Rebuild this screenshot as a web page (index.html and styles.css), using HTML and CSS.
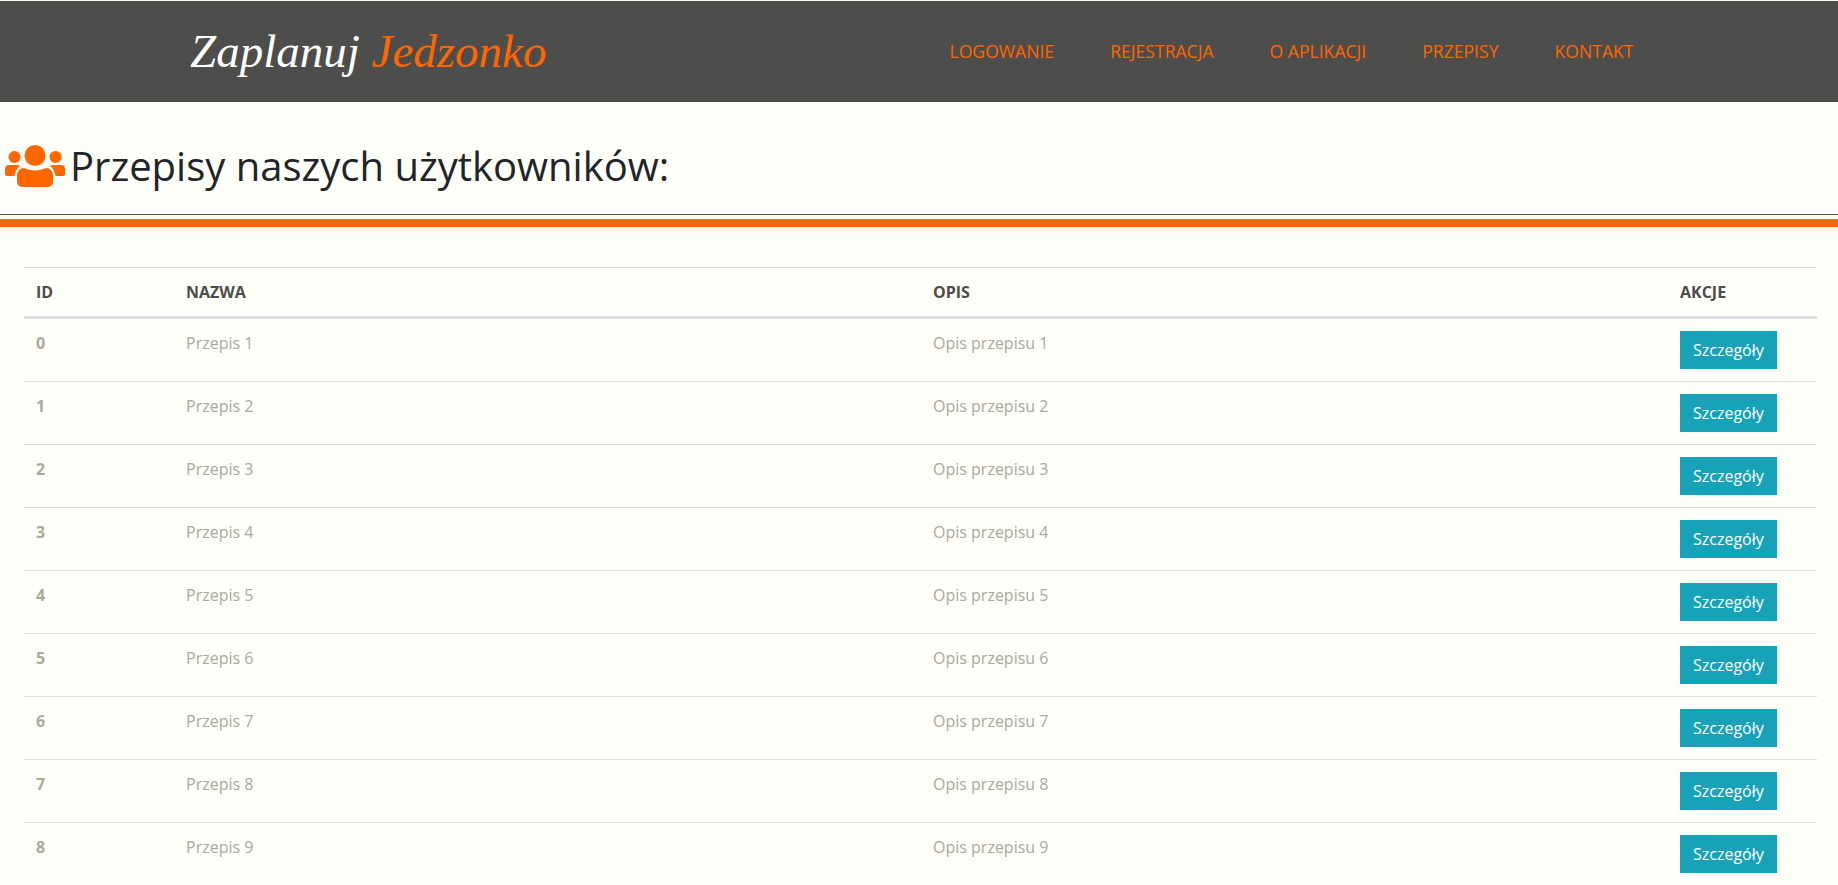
FILE: index.html
```html
<!DOCTYPE html>
<html lang="pl">
<head>
  <meta charset="UTF-8" />
  <meta name="viewport" content="width=device-width, initial-scale=1.0">
  <title>Przepisy</title>
  <link rel="stylesheet" href="styles.css">
</head>
<body>
  <header class="topbar">
    <a class="logo" href="#">Zaplanuj <span>Jedzonko</span></a>
    <nav class="main-nav">
      <a href="#">Logowanie</a>
      <a href="#">Rejestracja</a>
      <a href="#">O aplikacji</a>
      <a href="#">Przepisy</a>
      <a href="#">Kontakt</a>
    </nav>
  </header>

  <div class="page-title">
    <svg class="users-icon" viewBox="0 0 60 42" width="60" height="42">
      <circle cx="30" cy="10.5" r="10.5"/>
      <circle cx="9.5" cy="12" r="6"/>
      <circle cx="50.5" cy="12" r="6"/>
      <path d="M19 23c3 1.500 7 2.500 11 2.500s8-1 11-2.500c4 0 7 3.500 7 8v6a5 5 0 0 1-5 5H17a5 5 0 0 1-5-5v-6c0-4.500 3-8 7-8z"/>
      <path d="M4 20h8a6 6 0 0 1 3 1c-3 2-5 6-5.500 10H2a2 2 0 0 1-2-2v-5a4 4 0 0 1 4-4z"/>
      <path d="M56 20h-8a6 6 0 0 0-3 1c3 2 5 6 5.500 10H58a2 2 0 0 0 2-2v-5a4 4 0 0 0-4-4z"/>
    </svg>
    <h1>Przepisy naszych użytkowników:</h1>
  </div>
  <hr class="line-thin">
  <hr class="line-orange">

  <div class="table-wrap">
    <table class="recipes">
      <thead>
        <tr>
          <th class="col-id">ID</th>
          <th class="col-text">Nazwa</th>
          <th class="col-text">Opis</th>
          <th class="col-action">Akcje</th>
        </tr>
      </thead>
      <tbody>
        <tr><td class="num">0</td><td>Przepis 1</td><td>Opis przepisu 1</td><td><a class="btn" href="#">Szczegóły</a></td></tr>
        <tr><td class="num">1</td><td>Przepis 2</td><td>Opis przepisu 2</td><td><a class="btn" href="#">Szczegóły</a></td></tr>
        <tr><td class="num">2</td><td>Przepis 3</td><td>Opis przepisu 3</td><td><a class="btn" href="#">Szczegóły</a></td></tr>
        <tr><td class="num">3</td><td>Przepis 4</td><td>Opis przepisu 4</td><td><a class="btn" href="#">Szczegóły</a></td></tr>
        <tr><td class="num">4</td><td>Przepis 5</td><td>Opis przepisu 5</td><td><a class="btn" href="#">Szczegóły</a></td></tr>
        <tr><td class="num">5</td><td>Przepis 6</td><td>Opis przepisu 6</td><td><a class="btn" href="#">Szczegóły</a></td></tr>
        <tr><td class="num">6</td><td>Przepis 7</td><td>Opis przepisu 7</td><td><a class="btn" href="#">Szczegóły</a></td></tr>
        <tr><td class="num">7</td><td>Przepis 8</td><td>Opis przepisu 8</td><td><a class="btn" href="#">Szczegóły</a></td></tr>
        <tr><td class="num">8</td><td>Przepis 9</td><td>Opis przepisu 9</td><td><a class="btn" href="#">Szczegóły</a></td></tr>
      </tbody>
    </table>
  </div>
</body>
</html>
```

FILE: styles.css
```css
html {
  height: 100%;
  overflow: hidden;
}
body {
  margin: 0;
  height: 100%;
  overflow: hidden;
  background: #fffffa;
  color: #212529;
  font-family: "Open Sans", sans-serif;
  font-size: 16px;
  line-height: 1.5;
}
a {
  text-decoration: none;
}

.topbar {
  margin-top: 1px;
  height: 101px;
  padding: 0 204.500px 0 190px;
  background: #4d4d4b;
  display: flex;
  align-items: center;
  justify-content: space-between;
}
.logo {
  color: #fff;
  font-family: "Liberation Serif", cursive;
  font-style: italic;
  font-size: 47px;
  line-height: 1;
}
.logo span {
  color: #ff6600;
}
.main-nav {
  display: flex;
  gap: 56px;
}
.main-nav a {
  color: #ff6600;
  font-size: 17.6px;
  text-transform: uppercase;
}

.page-title {
  display: flex;
  align-items: center;
  gap: 5px;
  padding: 29px 0 13px 5px;
  height: 70px;
}
.page-title h1 {
  margin: 0;
  font-size: 40px;
  font-weight: 400;
  line-height: 48px;
  color: #212529;
}
.users-icon {
  fill: #ff6600;
}

.line-thin {
  margin: 0;
  border: 0;
  border-top: 1px solid #4d4d4b;
}
.line-orange {
  margin: 4px 0 0;
  border: 0;
  border-top: 8px solid #ff6600;
}

.table-wrap {
  padding: 40px 21px 0 24px;
}
.recipes {
  width: 100%;
  table-layout: fixed;
  border-collapse: collapse;
}
.recipes th,
.recipes td {
  box-sizing: border-box;
  padding: 12px;
  text-align: left;
  vertical-align: top;
  border-top: 1px solid #dee2e6;
}
.recipes th {
  color: #4d4d4b;
  line-height: 24px;
  font-weight: 700;
  text-transform: uppercase;
  border-bottom: 3px solid #dee2e6;
}
.recipes td {
  color: #a9a99d;
}
.recipes .num {
  font-weight: 700;
}
.col-id {
  width: 150px;
}
.col-action {
  width: 149px;
}
.btn {
  display: inline-block;
  padding: 7px 13px;
  background: #17a2b8;
  color: #fff;
  line-height: 24px;
}
```
